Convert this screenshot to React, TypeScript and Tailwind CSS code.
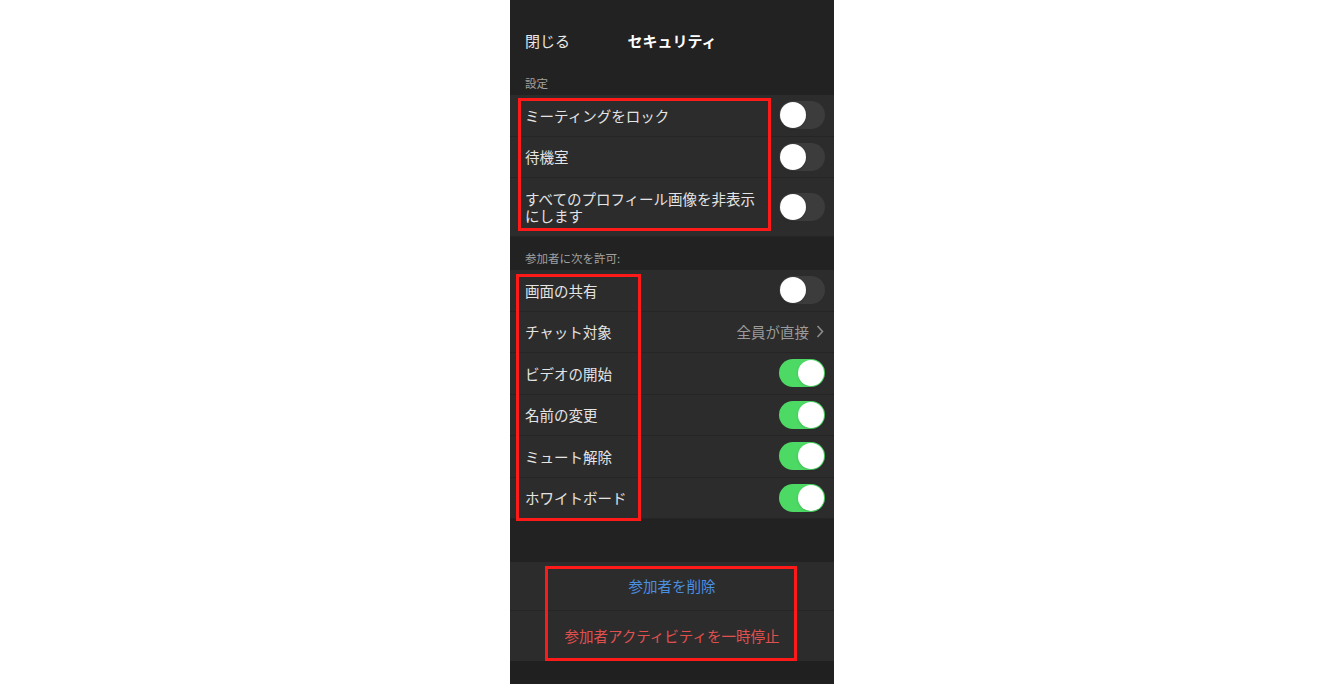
const font = { fontFamily: '"Noto Sans CJK JP", "Noto Sans", sans-serif' }

function Toggle({ on }: { on: boolean }) {
  return (
    <div
      className={`relative w-[46px] h-[28px] rounded-full ${on ? 'bg-[#4cd964]' : 'bg-[#3c3c3c]'}`}
    >
      <div
        className={`absolute top-[1px] w-[26px] h-[26px] rounded-full bg-white shadow ${on ? 'right-[1px]' : 'left-[1px]'}`}
      />
    </div>
  )
}

function Row({ label, on, tall }: { label: string; on: boolean; tall?: boolean }) {
  return (
    <div
      className={`flex items-center justify-between pl-[15px] pr-[9px] border-b border-[#252525] ${tall ? 'h-[59px]' : 'h-[41.5px]'}`}
    >
      <span className="text-[14.5px] leading-[17px] text-[#e4e4e4] max-w-[236px]">{label}</span>
      <Toggle on={on} />
    </div>
  )
}

function App() {
  return (
    <main className="w-screen h-[684px] bg-white flex justify-center" style={font}>
      <div className="relative w-[324px] h-[684px] bg-[#222222] flex flex-col">
        <header className="relative flex items-center h-[62px] pt-[20px] px-[15px]">
          <span className="text-[15px] text-[#e8e8e8]">閉じる</span>
          <span className="absolute left-0 right-0 pt-[20px] top-0 h-full flex items-center justify-center text-[15px] font-bold text-white pointer-events-none">
            セキュリティ
          </span>
        </header>

        <div className="h-[33px] flex items-end pb-[3px] px-[15px] text-[11.5px] text-[#a0a0a0]">設定</div>
        <section className="bg-[#2c2c2c]">
          <Row label="ミーティングをロック" on={false} />
          <Row label="待機室" on={false} />
          <Row label="すべてのプロフィール画像を非表示にします" on={false} tall />
        </section>

        <div className="h-[33px] flex items-end pb-[3px] px-[15px] text-[11.5px] text-[#a0a0a0]">参加者に次を許可:</div>
        <section className="bg-[#2c2c2c]">
          <Row label="画面の共有" on={false} />
          <div className="flex items-center justify-between pl-[15px] pr-[9px] h-[41.5px] border-b border-[#252525]">
            <span className="text-[14.5px] text-[#e4e4e4]">チャット対象</span>
            <span className="flex items-center gap-[7px] text-[14.5px] text-[#9b9b9b]">
              全員が直接
              <svg width="8" height="13" viewBox="0 0 8 13" fill="none" className="mr-[1px]">
                <polyline points="1.5,1 6.5,6.5 1.5,12" stroke="#8c8c8c" strokeWidth="1.6" />
              </svg>
            </span>
          </div>
          <Row label="ビデオの開始" on />
          <Row label="名前の変更" on />
          <Row label="ミュート解除" on />
          <Row label="ホワイトボード" on />
        </section>

        <div className="h-[43px]" />
        <section className="bg-[#2c2c2c]">
          <div className="h-[49px] flex items-center justify-center border-b border-[#262626] text-[14.5px] text-[#4a8fe0]">
            参加者を削除
          </div>
          <div className="h-[50px] flex items-center justify-center text-[14.5px] text-[#e0504f]">
            参加者アクティビティを一時停止
          </div>
        </section>
        <div className="flex-1 bg-[#202020]" />

        <div className="absolute left-[8px] top-[98px] w-[253px] h-[133px] border-[3px] border-[#ff1a1a] pointer-events-none" />
        <div className="absolute left-[6px] top-[274px] w-[125px] h-[247px] border-[3px] border-[#ff1a1a] pointer-events-none" />
        <div className="absolute left-[35px] top-[566px] w-[252px] h-[95px] border-[3px] border-[#ff1a1a] pointer-events-none" />
      </div>
    </main>
  )
}

export default App
